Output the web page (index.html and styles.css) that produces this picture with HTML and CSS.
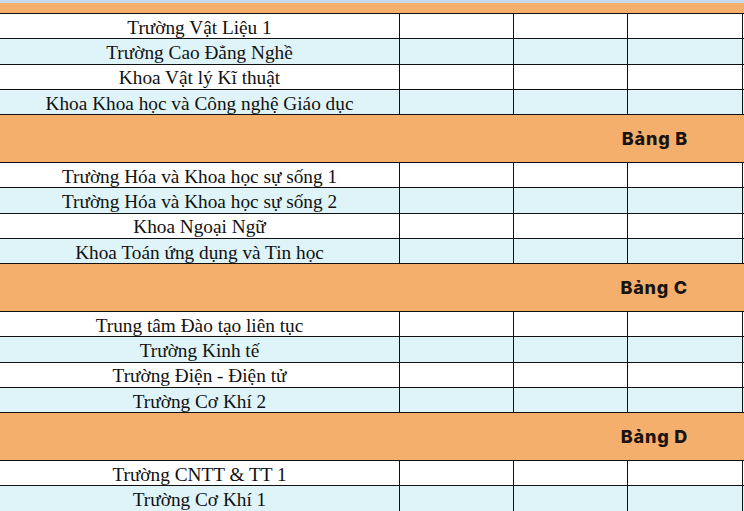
FILE: index.html
```html
<!DOCTYPE html>
<html lang="vi">
<head>
<meta charset="utf-8">
<link rel="stylesheet" href="styles.css">
</head>
<body>
<div class="sheet">
  <div class="top-band"></div>
  <div class="top-orange"></div>

  <div class="row"><div class="cell name">Trường Vật Liệu 1</div><div class="cell"></div><div class="cell"></div><div class="cell"></div><div class="tail"></div></div>
  <div class="row alt"><div class="cell name">Trường Cao Đẳng Nghề</div><div class="cell"></div><div class="cell"></div><div class="cell"></div><div class="tail"></div></div>
  <div class="row"><div class="cell name">Khoa Vật lý Kĩ thuật</div><div class="cell"></div><div class="cell"></div><div class="cell"></div><div class="tail"></div></div>
  <div class="row alt"><div class="cell name">Khoa Khoa học và Công nghệ Giáo dục</div><div class="cell"></div><div class="cell"></div><div class="cell"></div><div class="tail"></div></div>

  <div class="group"><span>Bảng B</span></div>

  <div class="row"><div class="cell name">Trường Hóa và Khoa học sự sống 1</div><div class="cell"></div><div class="cell"></div><div class="cell"></div><div class="tail"></div></div>
  <div class="row alt"><div class="cell name">Trường Hóa và Khoa học sự sống 2</div><div class="cell"></div><div class="cell"></div><div class="cell"></div><div class="tail"></div></div>
  <div class="row"><div class="cell name">Khoa Ngoại Ngữ</div><div class="cell"></div><div class="cell"></div><div class="cell"></div><div class="tail"></div></div>
  <div class="row alt"><div class="cell name">Khoa Toán ứng dụng và Tin học</div><div class="cell"></div><div class="cell"></div><div class="cell"></div><div class="tail"></div></div>

  <div class="group"><span>Bảng C</span></div>

  <div class="row"><div class="cell name">Trung tâm Đào tạo liên tục</div><div class="cell"></div><div class="cell"></div><div class="cell"></div><div class="tail"></div></div>
  <div class="row alt"><div class="cell name">Trường Kinh tế</div><div class="cell"></div><div class="cell"></div><div class="cell"></div><div class="tail"></div></div>
  <div class="row"><div class="cell name">Trường Điện - Điện tử</div><div class="cell"></div><div class="cell"></div><div class="cell"></div><div class="tail"></div></div>
  <div class="row alt"><div class="cell name">Trường Cơ Khí 2</div><div class="cell"></div><div class="cell"></div><div class="cell"></div><div class="tail"></div></div>

  <div class="group"><span>Bảng D</span></div>

  <div class="row"><div class="cell name">Trường CNTT &amp; TT 1</div><div class="cell"></div><div class="cell"></div><div class="cell"></div><div class="tail"></div></div>
  <div class="row alt"><div class="cell name">Trường Cơ Khí 1</div><div class="cell"></div><div class="cell"></div><div class="cell"></div><div class="tail"></div></div>
</div>
</body>
</html>
```

FILE: styles.css
```css
* { box-sizing: border-box; }
html, body {
  margin: 0;
  padding: 0;
  background: #ffffff;
  overflow: hidden;
}
.sheet {
  width: 744px;
  display: flex;
  flex-direction: column;
}
.top-band {
  height: 3px;
  background: #cbd9ef;
}
.top-orange {
  height: 11px;
  background: #f5af6d;
  border-bottom: 1px solid #111;
}
.row {
  display: grid;
  grid-template-columns: 400px 114px 114px 115px 1fr;
  height: 25.25px;
  border-bottom: 1px solid #111;
  background: #ffffff;
}
.row.alt {
  background: #dff4f8;
}
.cell {
  border-right: 1px solid #111;
  display: flex;
  align-items: center;
  justify-content: center;
}
.name {
  font-family: "Liberation Serif", "Times New Roman", serif;
  font-size: 19.3px;
  line-height: 1;
  padding-top: 3px;
  color: #111;
  white-space: nowrap;
}
.group {
  height: 48px;
  background: #f5af6d;
  border-bottom: 1px solid #111;
  display: flex;
  align-items: center;
  justify-content: flex-end;
  padding-right: 56px;
}
.group span {
  font-family: "Inter", "Noto Sans", sans-serif;
  font-weight: 800;
  font-size: 18px;
  letter-spacing: 0.8px;
  color: #1a1410;
}
```
